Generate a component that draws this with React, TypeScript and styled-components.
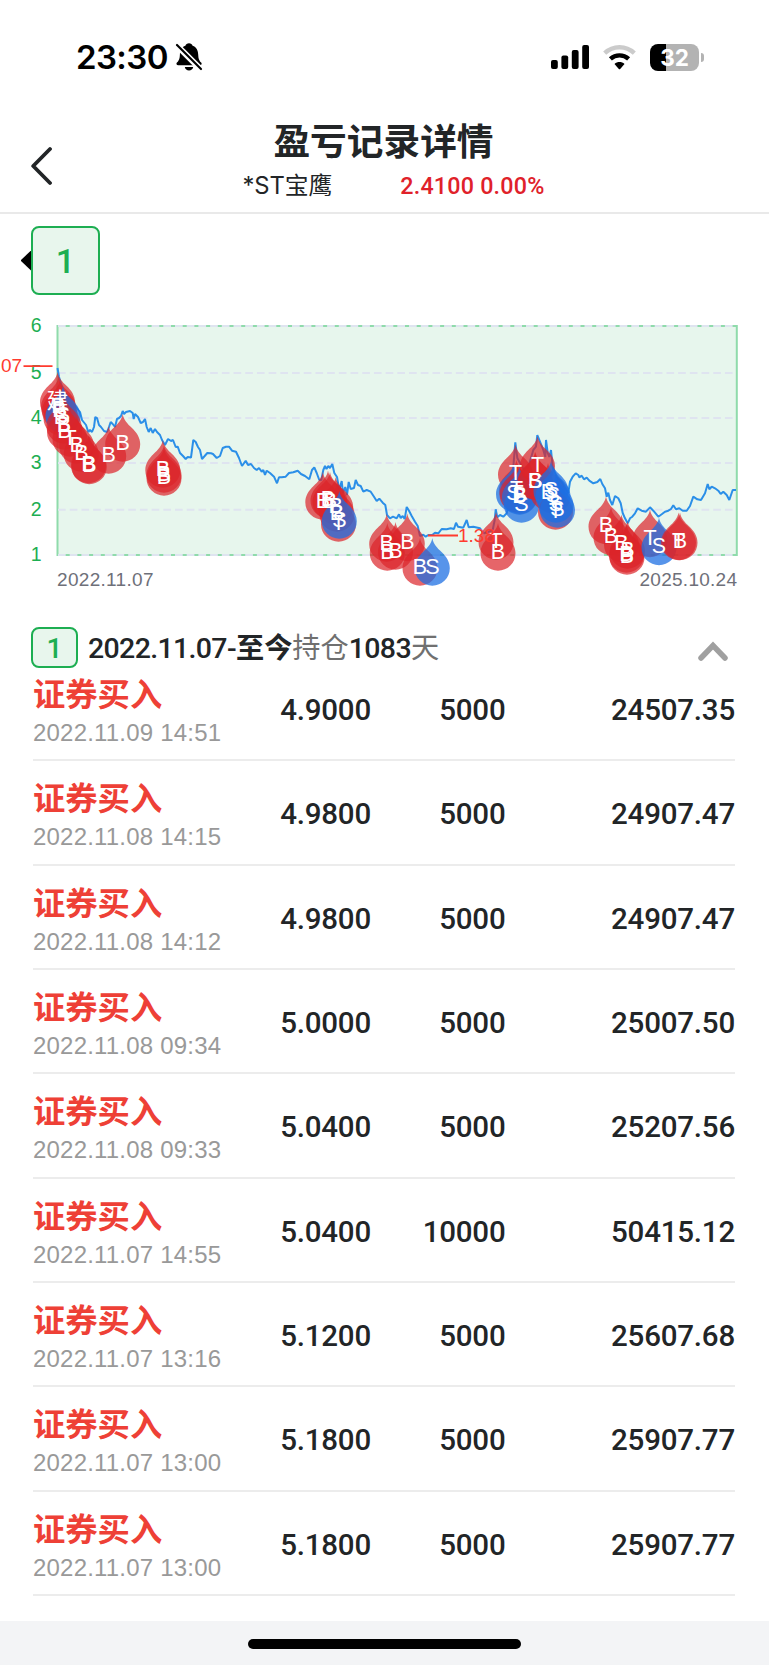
import React from "react";
import styled, { createGlobalStyle } from "styled-components";

const GlobalStyle = createGlobalStyle`
  * { box-sizing: border-box; }
  html, body { margin: 0; padding: 0; background: #fff; }
`;

const cjk = `"Noto Sans CJK SC", sans-serif`;
const numeric = `Roboto, ${cjk}`;
const plain = `"Liberation Sans", ${cjk}`;
const GREEN = "#1dae52";

const Screen = styled.main`
  width: 769px;
  height: 1665px;
  display: flex;
  flex-direction: column;
  overflow: hidden;
  background: #fff;
  color: #222527;
  font-family: ${plain};
`;

const StatusBar = styled.div`
  height: 114px;
  flex: none;
  display: flex;
  align-items: center;
  justify-content: space-between;
  padding: 0 65px 0 76px;
`;

const StatusGroup = styled.div<{ $gap: number }>`
  display: flex;
  align-items: center;
  gap: ${(p) => p.$gap}px;
`;

const Clock = styled.span`
  font: 600 33px/40px Inter, sans-serif;
  letter-spacing: -0.6px;
  color: #000;
`;

const Battery = styled.div`
  width: 49px;
  height: 27px;
  border-radius: 8px;
  background: linear-gradient(90deg, #000 0 16px, #b3b3b3 16px);
  color: #fff;
  font: 700 22.5px/27px Inter, sans-serif;
  text-align: center;
`;

const BatteryNub = styled.div`
  width: 3px;
  height: 9px;
  margin-left: 2px;
  border-radius: 0 3px 3px 0;
  background: #b3b3b3;
`;

const BatteryWrap = styled.div`
  display: flex;
  align-items: center;
`;

const Header = styled.header`
  height: 100px;
  flex: none;
  display: grid;
  grid-template-columns: 60px 1fr 60px;
  border-bottom: 2px solid #e9e9e9;
`;

const BackButton = styled.button`
  display: flex;
  align-items: flex-start;
  padding: 32px 0 0 29.5px;
  border: 0;
  background: none;
`;

const HeaderText = styled.div`
  display: flex;
  flex-direction: column;
  align-items: center;
`;

const Title = styled.h1`
  margin: 3px 2px 0 0;
  font: 700 36.7px/44px ${cjk};
  white-space: nowrap;
`;

const Quote = styled.div`
  width: 302px;
  display: flex;
  justify-content: space-between;
  margin: 10px 0 0 18px;
  line-height: 30px;
  white-space: nowrap;
`;

const StockName = styled.span`
  font: 400 23.8px/30px Inter, ${cjk};
  letter-spacing: -0.1px;
`;

const StockPrice = styled.span`
  font: 500 23.3px/30px ${numeric};
  letter-spacing: 0.2px;
  color: #e0212a;
`;

const Tabs = styled.div`
  display: flex;
  align-items: center;
  height: 94px;
  flex: none;
  padding: 0 0 1px 20.5px;
`;

const TabArrow = styled.i`
  width: 10.5px;
  height: 20px;
  background: #000;
  clip-path: polygon(100% 0, 0 50%, 100% 100%);
`;

const CycleBadge = styled.span<{ $large?: boolean }>`
  flex: none;
  width: ${(p) => (p.$large ? 69 : 47)}px;
  height: ${(p) => (p.$large ? 69 : 41)}px;
  display: flex;
  align-items: center;
  justify-content: center;
  padding-top: ${(p) => (p.$large ? 0 : 4)}px;
  border: 2px solid ${GREEN};
  border-radius: 8px;
  background: #e8f6ed;
  color: ${GREEN};
  font: 500 ${(p) => (p.$large ? 34 : 28)}px/1 Roboto, sans-serif;
`;

const ChartArea = styled.section`
  height: 312px;
  flex: none;
  svg { display: block; }
`;

const CycleHead = styled.div`
  height: 49px;
  flex: none;
  display: flex;
  align-items: center;
  padding: 5px 41px 0 31px;
`;

const CycleText = styled.div`
  flex: 1;
  margin: 1px 0 0 10px;
  font: 500 28.5px/40px ${numeric};
  letter-spacing: -0.65px;
  white-space: nowrap;
`;

const CycleWord = styled.span<{ $muted?: boolean }>`
  font: ${(p) => (p.$muted ? 400 : 700)} 28.2px/40px ${cjk};
  letter-spacing: 0;
  color: ${(p) => (p.$muted ? "#707070" : "inherit")};
`;

const Chevron = styled.svg`
  margin-top: 8px;
`;

const TradeList = styled.div`
  flex: 1;
  margin-top: -12px;
  padding: 0 34px 0 33px;
`;

const TradeRow = styled.div`
  height: 104.35px;
  display: grid;
  grid-template-columns: 200px 138px 134.5px 1fr;
  border-bottom: 2px solid #ececec;
`;

const TradeInfo = styled.div`
  display: flex;
  flex-direction: column;
  padding-top: 15px;
  white-space: nowrap;
`;

const TradeType = styled.span`
  font: 700 32.3px/40px ${cjk};
  color: #ee4036;
`;

const TradeTime = styled.span`
  margin-top: 7px;
  font: 400 24px/28px ${plain};
  letter-spacing: 0.2px;
  color: #999;
`;

const Amount = styled.span`
  font: 500 29.5px/36px ${numeric};
  letter-spacing: -0.2px;
  text-align: right;
  padding-top: 35px;
`;

const HomeArea = styled.footer`
  height: 44px;
  flex: none;
  display: flex;
  justify-content: center;
  padding-top: 18px;
  background: #f3f4f6;
`;

const HomeBar = styled.div`
  width: 273px;
  height: 10px;
  border-radius: 5px;
  background: #000;
`;

type Pin = [x: number, y: number, label: string, sell?: boolean];

/* Each pin: horizontal centre, vertical centre of its letter, letter. */
const pins: Pin[] = [
  [57.5, 400, "建"], [58.5, 405, "B"], [59.5, 409, "B"], [61, 416, "B"],
  [63, 414, "S", true], [64, 424, "B"], [64.5, 430, "B"], [70, 437, "T"],
  [76.7, 444, "B"], [81.3, 452, "B"], [88.5, 463.5, "B"], [89.3, 464.5, "B"],
  [108.7, 454, "B"], [122.7, 442, "B"],
  [162.8, 468, "B"], [164, 473, "B"], [164, 476, "B"],
  [322.8, 500, "B"], [328, 498.5, "B"], [330, 500, "B"], [335.7, 505, "B"],
  [337, 512, "B"], [338.5, 522, "T"], [339.3, 519, "S", true],
  [386.7, 542, "B"], [387.3, 551, "B"], [395.5, 550, "B"], [407.3, 541.5, "B"],
  [420, 566, "B"], [432.3, 566, "S", true],
  [496, 540, "T"], [498, 551, "B"],
  [515.5, 472.5, "T"], [516.5, 488, "T"], [513.5, 492, "S", true], [517, 492, "T"],
  [520, 494, "B"], [521.5, 503, "S", true], [519.5, 495, "B", true],
  [537.5, 464, "T"], [535, 480, "B"], [535.5, 480, "S"],
  [548, 491, "B"], [551, 489, "S", true], [553, 494, "S", true], [555.5, 510, "T"],
  [556, 503, "S", true], [557.5, 508, "S", true],
  [606, 524.5, "B"], [611, 535.5, "B"], [621.5, 542.5, "B"], [627.5, 549, "B"],
  [626.5, 553, "B"], [627, 555, "B"],
  [650, 537.5, "T"], [659, 545.5, "S", true], [678.5, 540.5, "T"], [680, 540.5, "B"],
];

const pricePath = `
M57.5 368 L59 377 63 390 72 402 80 412 82 420 86 425 88.3 432 90 430 92 432 94 427 95.3 417 97 418 99 425 101 427 104 431 107 432 109 427 110.7 422 112.7 424 115 427 117 419 119 418 121 416 122.7 411 124 414 126 412 130 411 132.7 413 133.7 419 135 414 138 417 140.7 423 143 422 145 419 146.7 427 148.7 432 150.7 428 152.7 433 155 429 157 432 160 435 162 440 165 445 168 439 171 441 173 440 175.7 447 177.7 446.7 180 453 183 456 185.7 459 187.7 457 191 457.5 193.3 440 195.7 442 198 447 200 450 202 459 204.7 456 207.3 453 211 453.3 213 454 216.7 458 220 456 222.7 448 226 446.7 229 446.7 232 450.7 236 451.7 239 458 242 466 245.7 460.7 248 465 251 464 254 468 256.7 470 259 468 261.7 471.7 263.3 470 265 475 266.7 470.7 270 473 274 476.7 277 483.3 279 477.3 281.7 477.3 285.7 476.7 289 473 293.3 472.3 297.7 470.7 301 474 305 476 309.3 479.3 312 470 314.3 467.3 316.7 473 319.3 480 321.3 480 323.3 470 325 466 326.5 469 328.3 466 330 468 332.3 464 334.3 473 337 477 339.3 490 341.7 481 343 493 345.3 487 347 495 348.7 482 350.7 489 354 488 355.7 480 358 485 360.7 486 363.3 491.7 366.7 490 370.7 491.7 374 496.7 376.7 501 379.3 498.7 382.7 502.7 385.3 505 387 515
390 518.3 L393 516.7 396.7 518.3 399 514.3 400.7 518 402.7 516 404.7 519 406.7 507 409 510.7 411.7 516 415 521.7 417.7 526 420 536 423.3 534.7 425.7 536.7 428.3 535 432.3 535 435 532.7 438.3 533.3 441.7 529 446.7 529.3 450.7 528.3 454 529 456 522.7 458 526.7 463.3 527.7 466.7 520 468.7 527.3 473.3 526.7 480 528.3 484 533.3 488.3 531.7 492.7 530 494.7 520 495.7 509.3 497.3 517.3 500 515 503.3 516.7 506.7 513.3 509.3 503 511.7 493 513.3 467 515.3 442.3 517.3 458 520 463 524 470 528.3 467 533.3 450 536 446.7 537.3 435 540 441.7 543.3 450 545.3 457 546 440 547.7 453 549.3 457 551 450 552.7 467 556.7 477 561.7 482 568.3 493 570 481.7 572.7 476.7 575.7 473.3 578.3 475 579.3 477.3 581.7 475.7 584 479.3 586.7 477.7 589.3 480.7 593.3 483.3 597.3 482 600.3 479 602.3 484 605 488.3 606.7 496.7 608.3 492.7 610 500 612.3 505 615 496 618.3 498.3 620.7 503.3 622.7 513 625 518.3 627.7 523.3 630 518.3 632.3 516.7 635 513.3 637.7 508.3 641.7 510.7 646 511.7 650 507.3 653.3 510.7 658.3 516.7 661.7 514.3 665 511.7 668.3 510.7 671 509 673.3 505.3 676 509.3 679.3 508.3 682.7 510.7 686.7 510.7 690 506 693.3 496.7 697.3 499.3 701 500 705 493.3 707.7 484 709.3 489.3 711.7 486.7 715 488.3 718.3 490.7 720.7 494 723.3 491.7 726.7 495 729.3 500 732.7 490 736 490`;

const scale = [
  { label: "6", y: 326 }, { label: "5", y: 373 }, { label: "4", y: 418 },
  { label: "3", y: 463 }, { label: "2", y: 509.7 }, { label: "1", y: 555 },
];

function PriceChart() {
  return (
    <svg width="769" height="312" viewBox="0 308 769 312" fontFamily={`"Liberation Sans", "Noto Sans CJK SC", sans-serif`} fontSize="19">
      <rect x="57.5" y="326" width="679.3" height="229" fill="#e7f6ed" stroke="#8fdbab" strokeWidth="2" />
      {scale.map((s) => (
        <React.Fragment key={s.label}>
          <line x1="58" x2="734" y1={s.y} y2={s.y} stroke="#dfe4f0" strokeWidth="2" strokeDasharray="7.7 4" />
          <text x="41.5" y={s.y + 5.8} textAnchor="end" fontSize="19.5" fill={GREEN}>{s.label}</text>
        </React.Fragment>
      ))}
      <path d={pricePath} fill="none" stroke="#2b8fe8" strokeWidth="2" strokeLinejoin="bevel" />
      {pins.map(([x, y, , sell], i) => (
        <path
          key={i}
          transform={`translate(${x} ${y - 28})`}
          d="M0 0C1 6 5 10 9 13.8C14 18.5 17.5 23.8 17.5 30.2A17.5 17.5 0 0 1-17.5 30.2C-17.5 23.8-14 18.5-9 13.8C-5 10-1 6 0 0Z"
          fill={sell ? "#1c6fe2" : "#dc2329"}
          fillOpacity={sell ? 0.74 : 0.7}
        />
      ))}
      <g fill="#fff" fontSize="21.5" textAnchor="middle">
        {pins.map(([x, y, label], i) => (
          <text key={i} x={x} y={y + 7.5}>{label}</text>
        ))}
      </g>
      <path d="M23.5 366.2H52.5M428 535.5H458" stroke="#ff3b2f" strokeWidth="1.8" />
      <g fill="#ff3b2f">
        <text x="1" y="372.4">07</text>
        <text x="458" y="542">1.38</text>
      </g>
      <g fill="#6e7079">
        <text x="57" y="586" textLength="96.5">2022.11.07</text>
        <text x="639.5" y="586" textLength="97.5">2025.10.24</text>
      </g>
    </svg>
  );
}

const trades = [
  ["2022.11.09 14:51", "4.9000", "5000", "24507.35"],
  ["2022.11.08 14:15", "4.9800", "5000", "24907.47"],
  ["2022.11.08 14:12", "4.9800", "5000", "24907.47"],
  ["2022.11.08 09:34", "5.0000", "5000", "25007.50"],
  ["2022.11.08 09:33", "5.0400", "5000", "25207.56"],
  ["2022.11.07 14:55", "5.0400", "10000", "50415.12"],
  ["2022.11.07 13:16", "5.1200", "5000", "25607.68"],
  ["2022.11.07 13:00", "5.1800", "5000", "25907.77"],
  ["2022.11.07 13:00", "5.1800", "5000", "25907.77"],
];

const MutedBell = () => (
  <svg width="28" height="30" viewBox="0 0 28 30">
    <path d="M14 1.2c1.8 0 3.2 1 3.6 2.6 3.8 1.3 5.4 4.6 5.6 8.6.2 4.6 1 6 3 8.2 1 1.2.4 2.7-1.3 2.7H3.2c-1.7 0-2.3-1.5-1.3-2.7 2-2.2 2.8-3.6 3-8.2.2-4 1.8-7.3 5.5-8.6C10.8 2.2 12.2 1.2 14 1.2Z" />
    <path d="M9.8 25h8.4c-.4 2.3-2 3.5-4.2 3.5S10.2 27.3 9.8 25Z" />
    <path d="M1 2.5 26.5 28" stroke="#fff" strokeWidth="6" />
    <path d="M2 3 26 27" stroke="#000" strokeWidth="2.2" strokeLinecap="round" />
  </svg>
);

const Signal = () => (
  <svg width="38" height="24" viewBox="0 0 38 24">
    <rect x="0" y="15" width="6.8" height="9" rx="2" />
    <rect x="10.4" y="10.5" width="6.8" height="13.5" rx="2" />
    <rect x="20.8" y="5" width="6.8" height="19" rx="2" />
    <rect x="31.2" y="0" width="6.8" height="24" rx="2" />
  </svg>
);

const Wifi = () => (
  <svg width="33" height="25" viewBox="0 0 33 25" fill="none">
    <path d="M1.7 8.2C10 .3 23 .3 31.3 8.2" stroke="#cbcbcb" strokeWidth="4.4" />
    <path d="M7.4 13.9C12.6 9.2 20.4 9.2 25.6 13.9" stroke="#000" strokeWidth="4.4" />
    <path d="M11.5 19c2.900-2.600 7.100-2.600 10 0l-4.300 4.900q-.7.7-1.400 0Z" fill="#000" />
  </svg>
);

export default function App() {
  return (
    <Screen>
      <GlobalStyle />
      <StatusBar>
        <StatusGroup $gap={7.5}>
          <Clock>23:30</Clock>
          <MutedBell />
        </StatusGroup>
        <StatusGroup $gap={14}>
          <Signal />
          <Wifi />
          <BatteryWrap>
            <Battery>32</Battery>
            <BatteryNub />
          </BatteryWrap>
        </StatusGroup>
      </StatusBar>

      <Header>
        <BackButton aria-label="返回">
          <svg width="22" height="40" viewBox="0 0 22 40" fill="none" stroke="#222527" strokeWidth="3.8" strokeLinecap="round" strokeLinejoin="round">
            <path d="M20 3 3.2 20 20 37" />
          </svg>
        </BackButton>
        <HeaderText>
          <Title>盈亏记录详情</Title>
          <Quote>
            <StockName>*ST宝鹰</StockName>
            <StockPrice>2.4100 0.00%</StockPrice>
          </Quote>
        </HeaderText>
      </Header>

      <Tabs>
        <TabArrow />
        <CycleBadge $large>1</CycleBadge>
      </Tabs>

      <ChartArea>
        <PriceChart />
      </ChartArea>

      <CycleHead>
        <CycleBadge>1</CycleBadge>
        <CycleText>
          2022.11.07-<CycleWord>至今</CycleWord>
          <CycleWord $muted>持仓</CycleWord>1083<CycleWord $muted>天</CycleWord>
        </CycleText>
        <Chevron width="30" height="20" viewBox="0 0 30 20" fill="none" stroke="#a0a0a0" strokeWidth="5.5" strokeLinecap="round">
          <path d="M3 17 15 4.5 27 17" />
        </Chevron>
      </CycleHead>

      <TradeList>
        {trades.map(([time, price, count, total], i) => (
          <TradeRow key={i}>
            <TradeInfo>
              <TradeType>证券买入</TradeType>
              <TradeTime>{time}</TradeTime>
            </TradeInfo>
            <Amount>{price}</Amount>
            <Amount>{count}</Amount>
            <Amount>{total}</Amount>
          </TradeRow>
        ))}
      </TradeList>

      <HomeArea>
        <HomeBar />
      </HomeArea>
    </Screen>
  );
}
